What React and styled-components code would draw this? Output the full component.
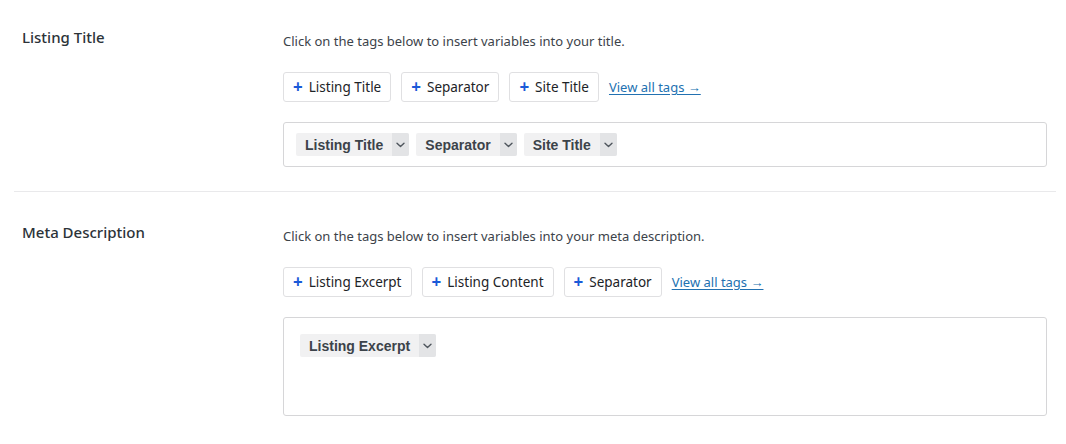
import React from "react";
import styled, { createGlobalStyle } from "styled-components";

const GlobalStyle = createGlobalStyle`
  html, body {
    margin: 0;
    padding: 0;
    background: #fff;
  }
  body {
    font-family: "Noto Sans", "Open Sans", sans-serif;
    color: #3c434a;
  }
`;

const sections = [
  {
    label: "Listing Title",
    help: "Click on the tags below to insert variables into your title.",
    buttons: ["Listing Title", "Separator", "Site Title"],
    tags: ["Listing Title", "Separator", "Site Title"],
    tall: false,
  },
  {
    label: "Meta Description",
    help: "Click on the tags below to insert variables into your meta description.",
    buttons: ["Listing Excerpt", "Listing Content", "Separator"],
    tags: ["Listing Excerpt"],
    tall: true,
  },
];

function Chevron() {
  return (
    <svg width="9" height="6" viewBox="0 0 9 6" fill="none">
      <path
        d="M1 1.2 L4.5 4.6 L8 1.2"
        stroke="#50575e"
        strokeWidth="1.4"
        strokeLinecap="round"
        strokeLinejoin="round"
      />
    </svg>
  );
}

export default function App() {
  return (
    <>
      <GlobalStyle />
      <Page>
        {sections.map((s) => (
          <Row key={s.label}>
            <Label>{s.label}</Label>
            <Field>
              <Help>{s.help}</Help>
              <ButtonBar>
                {s.buttons.map((b) => (
                  <AddButton key={b}>
                    <Plus>+</Plus>
                    {b}
                  </AddButton>
                ))}
                <ViewAll href="#">View all tags →</ViewAll>
              </ButtonBar>
              <TagBox $tall={s.tall}>
                {s.tags.map((t) => (
                  <Tag key={t}>
                    <TagName>{t}</TagName>
                    <TagCaret>
                      <Chevron />
                    </TagCaret>
                  </Tag>
                ))}
              </TagBox>
            </Field>
          </Row>
        ))}
      </Page>
    </>
  );
}

const Page = styled.div`
  margin: 0 10px 0 14px;
`;

const Row = styled.div`
  display: grid;
  grid-template-columns: 261px 1fr;
  padding: 30px 9px 24px 8px;
  border-bottom: 1px solid #e9e9eb;
  &:first-child {
    padding-top: 27px;
  }
  &:last-child {
    border-bottom: none;
  }
`;

const Label = styled.div`
  margin-top: -1px;
  font-size: 15px;
  font-weight: 500;
  line-height: 22px;
  color: #2c3338;
`;

const Field = styled.div`
  display: flex;
  flex-direction: column;
`;

const Help = styled.p`
  margin: 4px 0 0;
  font-size: 13px;
  line-height: 20px;
  color: #3c434a;
`;

const ButtonBar = styled.div`
  display: flex;
  align-items: center;
  gap: 10px;
  margin-top: 21px;
`;

const AddButton = styled.button`
  display: flex;
  align-items: center;
  gap: 6px;
  height: 30px;
  padding: 0 9px;
  background: #fff;
  border: 1px solid #e0e0e2;
  border-radius: 3px;
  font-family: "Noto Sans", "Open Sans", sans-serif;
  font-size: 13.5px;
  color: #1d2327;
  cursor: pointer;
`;

const Plus = styled.span`
  font-size: 17px;
  font-weight: 700;
  line-height: 1;
  color: #1a5ad8;
  margin-top: -2px;
`;

const ViewAll = styled.a`
  font-size: 13px;
  color: #2271b1;
  text-decoration: underline;
  text-underline-offset: 2px;
`;

const TagBox = styled.div`
  display: flex;
  flex-wrap: wrap;
  align-items: flex-start;
  gap: 7px;
  margin-top: 20px;
  border: 1px solid #d6d6d8;
  border-radius: 3px;
  padding: ${(p) => (p.$tall ? "16px 16px" : "10px 12px")};
  min-height: ${(p) => (p.$tall ? "99px" : "43px")};
  box-sizing: border-box;
`;

const Tag = styled.div`
  display: flex;
  height: 23px;
  border-radius: 2px;
  overflow: hidden;
  background: #f1f1f2;
`;

const TagName = styled.span`
  display: flex;
  align-items: center;
  padding: 0 9px;
  font-family: "Liberation Sans", Arial, sans-serif;
  font-weight: 700;
  font-size: 14px;
  color: #3c434a;
`;

const TagCaret = styled.span`
  display: flex;
  align-items: center;
  justify-content: center;
  width: 17px;
  background: #e3e4e6;
`;
